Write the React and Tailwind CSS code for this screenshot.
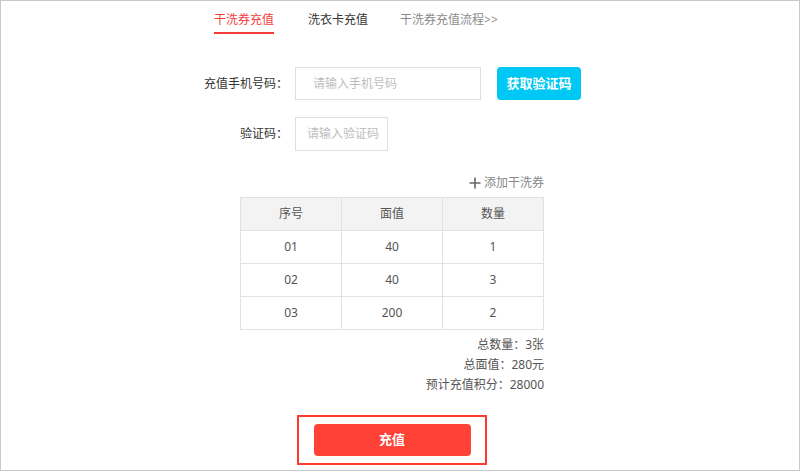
import React from 'react';

const rows = [
    { no: '01', value: '40', count: '1' },
    { no: '02', value: '40', count: '3' },
    { no: '03', value: '200', count: '2' },
];

const App = () => {
    return (
        <div
            className="w-[800px] h-[471px] border border-[#c8c8c8] bg-white text-[12px] text-[#333] overflow-hidden"
            style={{ fontFamily: '"Noto Sans", "Noto Sans CJK SC", sans-serif' }}
        >
            {/* Tabs */}
            <div className="flex items-start pt-[9px] pl-[213px] leading-[20px] text-[12px]">
                <div className="text-[#f43c3c] pb-[2px] border-b-2 border-[#f43c3c]">干洗券充值</div>
                <div className="ml-[34px] text-[#333]">洗衣卡充值</div>
                <div className="ml-[32px] text-[#8a8a8a]">干洗券充值流程&gt;&gt;</div>
            </div>

            {/* Phone */}
            <div className="flex items-center mt-[33px] ml-[177px]">
                <label className="w-[110px] text-right">充值手机号码：</label>
                <div className="ml-[7px] w-[186px] h-[33px] border border-[#dedede] flex items-center pl-[17px] text-[#bdbdbd]">
                    请输入手机号码
                </div>
                <button className="ml-[16px] w-[84px] h-[33px] rounded-[4px] bg-[#00c8f4] text-white font-bold text-[13px]">
                    获取验证码
                </button>
            </div>

            {/* Code */}
            <div className="flex items-center mt-[17px] ml-[177px]">
                <label className="w-[110px] text-right">验证码：</label>
                <div className="ml-[7px] w-[93px] h-[34px] border border-[#dedede] flex items-center pl-[11px] text-[#bdbdbd]">
                    请输入验证码
                </div>
            </div>

            {/* Table block */}
            <div className="ml-[239px] w-[304px] mt-[22px]">
                <div className="flex items-center justify-end text-[#888] h-[20px]">
                    <svg width="12" height="12" viewBox="0 0 12 12" className="mr-[3px]">
                        <path d="M6 0.5V11.5M0.5 6H11.5" stroke="#666" strokeWidth="1.6" />
                    </svg>
                    添加干洗券
                </div>
                <table className="mt-[4px] w-[304px] border-collapse text-[#555] text-center">
                    <thead>
                        <tr className="bg-[#f3f3f3] h-[33px]">
                            <th className="border border-[#e2e2e2] font-normal w-[101px]">序号</th>
                            <th className="border border-[#e2e2e2] font-normal w-[101px]">面值</th>
                            <th className="border border-[#e2e2e2] font-normal">数量</th>
                        </tr>
                    </thead>
                    <tbody>
                        {rows.map(r => (
                            <tr key={r.no} className="h-[33px]">
                                <td className="border border-[#e2e2e2]">{r.no}</td>
                                <td className="border border-[#e2e2e2]">{r.value}</td>
                                <td className="border border-[#e2e2e2]">{r.count}</td>
                            </tr>
                        ))}
                    </tbody>
                </table>
                <div className="mt-[5px] flex flex-col items-end text-[#555] leading-[20px]">
                    <div>总数量：3张</div>
                    <div>总面值：280元</div>
                    <div>预计充值积分：28000</div>
                </div>
            </div>

            {/* Submit */}
            <div className="ml-[296px] mt-[20px] w-[190px] h-[50px] border-2 border-[#ff3b30] flex items-center justify-center">
                <button className="w-[157px] h-[32px] rounded-[4px] bg-[#ff4136] text-white font-bold text-[13px]">
                    充值
                </button>
            </div>
        </div>
    );
};

export default App;
